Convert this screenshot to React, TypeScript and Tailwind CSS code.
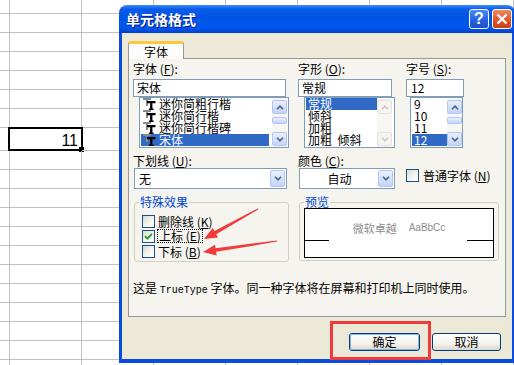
import React from "react";

const ROWS = [14, 19, 19, 19, 19, 19, 19, 23, 19, 19, 19, 19, 19, 19, 19, 19, 19, 19, 19, 19, 19];
const COLS = [10, 72, 72, 72, 72, 72, 72, 72];

const SB_ON = "border-[#B4C7F4] bg-[linear-gradient(180deg,#E8EFFE_0%,#C3D4FB_100%)]";
const SB_OFF = "border-[#E6E4DA] bg-[#F5F4EF]";

function Chevron({ up = false, color = "#4D6185" }: { up?: boolean; color?: string }) {
  return (
    <svg width="8" height="5" viewBox="0 0 8 5">
      <path d={up ? "M1 4.2 L4 1.2 L7 4.2" : "M1 0.8 L4 3.8 L7 0.8"} fill="none" stroke={color} strokeWidth="1.6" />
    </svg>
  );
}

function ScrollBar({ disabled = false, className = "" }: { disabled?: boolean; className?: string }) {
  const btn = disabled ? SB_OFF : SB_ON;
  const arrow = disabled ? "#CBC9BC" : "#4D6185";
  return (
    <div className={`flex w-[15px] flex-col bg-[#F7F6F2] pb-[1px] pt-[2px] ${className}`}>
      <div className={`flex h-[14px] items-center justify-center rounded-[2px] border ${btn}`}>
        <Chevron up color={arrow} />
      </div>
      {!disabled && <div className={`mt-[3px] h-[7px] rounded-[2px] border ${btn}`} />}
      <div className={`mt-auto flex h-[14px] items-center justify-center rounded-[2px] border ${btn}`}>
        <Chevron color={arrow} />
      </div>
    </div>
  );
}

// TrueType badge shown in front of each font name
function TTIcon() {
  return (
    <svg className="ml-[2px] mr-[3px] shrink-0" width="13" height="12" viewBox="0 0 13 12">
      <path d="M0 0 H8 V2 H5 V8 H3 V2 H0 Z" fill="#8A8A8A" />
      <path d="M4 3 H12.5 V5.2 H9.4 V10.6 H10.6 V12 H5.9 V10.6 H7.1 V5.2 H4 Z" fill="#000" />
    </svg>
  );
}

function Row({ text, selected = false, icon = false }: { text: string; selected?: boolean; icon?: boolean }) {
  return (
    <div
      className={`flex h-[12px] items-center whitespace-pre leading-[12px] ${
        selected ? "bg-[#316AC5] text-white" : ""
      }`}
    >
      {icon && <TTIcon />}
      <span className={icon ? "" : "pl-[2px]"}>{text}</span>
    </div>
  );
}

function Check({ checked = false }: { checked?: boolean }) {
  return (
    <span className="flex h-[13px] w-[13px] shrink-0 items-center justify-center border border-[#1C5180] bg-[linear-gradient(135deg,#DCDBD5_0%,#F6F6F4_60%,#FFFFFF_100%)]">
      {checked && (
        <svg width="9" height="9" viewBox="0 0 9 9">
          <path d="M1 4.2 L3.4 6.6 L8 1.8" fill="none" stroke="#21A121" strokeWidth="1.9" />
        </svg>
      )}
    </span>
  );
}

function Label({ text, k }: { text: string; k: string }) {
  return (
    <span className="whitespace-nowrap">
      {text} (<u>{k}</u>):
    </span>
  );
}

function DropDown({ text, center = false, className = "" }: { text: string; center?: boolean; className?: string }) {
  return (
    <div className={`flex h-[21px] border border-[#7F9DB9] bg-white p-[1px] ${className}`}>
      <div className={`flex flex-1 items-center ${center ? "justify-center" : "pl-[3px]"}`}>{text}</div>
      <div className={`flex w-[15px] items-center justify-center rounded-[2px] border ${SB_ON}`}>
        <Chevron />
      </div>
    </div>
  );
}

function Sheet() {
  return (
    <div className="flex flex-col">
      {ROWS.map((h, r) => (
        <div key={r} className="flex" style={{ height: h }}>
          {COLS.map((w, c) => (
            <div
              key={c}
              className="relative shrink-0 border-b border-r border-[#C0C0C0]"
              style={{ width: w }}
            >
              {r === 7 && c === 1 && (
                <>
                  <div className="flex h-full items-end justify-end pb-[1px] pr-[3px] font-['Liberation_Sans',sans-serif] text-[16px] leading-[16px]">
                    11
                  </div>
                  <div className="absolute -left-[2px] -top-[1px] h-[24px] w-[75px] border-2 border-black" />
                  <div className="absolute left-[69px] top-[19px] h-[5px] w-[5px] bg-black" />
                </>
              )}
            </div>
          ))}
        </div>
      ))}
    </div>
  );
}

function TitleBar() {
  return (
    <div className="flex h-[28px] items-center rounded-t-[8px] bg-[linear-gradient(180deg,#3C8DFF_0%,#0B5CEA_14%,#0054E3_45%,#0058EE_80%,#0040D0_100%)] pl-[7px] pr-[3px]">
      <span className="flex-1 text-[14px] font-bold leading-none text-white [text-shadow:1px_1px_#0A1C80]">
        单元格格式
      </span>
      <div className="flex h-[20px] w-[20px] items-center justify-center rounded-[3px] border border-white bg-[linear-gradient(180deg,#4D8CF5_0%,#2460DE_60%,#1D50C8_100%)] font-['Liberation_Sans',sans-serif] text-[16px] font-bold leading-none text-white">
        ?
      </div>
      <div className="ml-[3px] flex h-[20px] w-[20px] items-center justify-center rounded-[3px] border border-white bg-[linear-gradient(180deg,#F08A60_0%,#E0542B_55%,#C8401C_100%)]">
        <svg width="12" height="12" viewBox="0 0 12 12">
          <path d="M1.5 1.5 L10.5 10.5 M10.5 1.5 L1.5 10.5" stroke="#fff" strokeWidth="2.4" />
        </svg>
      </div>
    </div>
  );
}

function XpButton({ text, focus = false }: { text: string; focus?: boolean }) {
  return (
    <div className="h-[18px] rounded-[3px] border border-[#003C74] bg-[linear-gradient(180deg,#FFFFFF_0%,#F3F2EC_60%,#DCD8CC_100%)]">
      <div
        className={`flex h-full items-center justify-center rounded-[2px] leading-none ${
          focus ? "border border-[#8CB2EE]" : ""
        }`}
      >
        {text}
      </div>
    </div>
  );
}

function Panel() {
  return (
    <div className="h-[259px] border border-[#919B9C] bg-[#F5F4EF] pl-[4px] pt-[3px]">
      {/* font / style / size */}
      <div className="flex">
        <div className="w-[156px]">
          <div className="h-[17px] leading-[14px]">
            <Label text="字体" k="F" />
          </div>
          <div className="flex h-[18px] w-[153px] items-center border border-[#7F9DB9] bg-white pl-[3px]">宋体</div>
          <div className="ml-[6px] flex h-[51px] w-[150px] border border-[#7F9DB9] bg-white">
            <div className="ml-[1px] w-[128px]">
              <Row icon text="迷你简粗行楷" />
              <Row icon text="迷你简行楷" />
              <Row icon text="迷你简行楷碑" />
              <Row icon selected text="宋体" />
            </div>
            <ScrollBar className="ml-[3px]" />
          </div>
        </div>
        <div className="ml-[9px] w-[97px]">
          <div className="h-[17px] leading-[14px]">
            <Label text="字形" k="O" />
          </div>
          <div className="flex h-[18px] w-[94px] items-center border border-[#7F9DB9] bg-white pl-[3px]">常规</div>
          <div className="ml-[6px] flex h-[51px] w-[91px] border border-[#7F9DB9] bg-white">
            <div className="ml-[1px] w-[71px]">
              <Row selected text="常规" />
              <Row text="倾斜" />
              <Row text="加粗" />
              <Row text="加粗  倾斜" />
            </div>
            <ScrollBar disabled />
          </div>
        </div>
        <div className="ml-[11px] w-[58px]">
          <div className="h-[17px] leading-[14px]">
            <Label text="字号" k="S" />
          </div>
          <div className="flex h-[18px] w-[58px] items-center border border-[#7F9DB9] bg-white pl-[4px]">12</div>
          <div className="ml-[4px] flex h-[51px] w-[53px] border border-[#7F9DB9] bg-white">
            <div className="ml-[1px] w-[35px]">
              <Row text="9" />
              <Row text="10" />
              <Row text="11" />
              <Row selected text="12" />
            </div>
            <ScrollBar />
          </div>
        </div>
      </div>

      {/* underline / colour / normal font */}
      <div className="mt-[6px] flex">
        <div className="w-[156px]">
          <div className="h-[14px] leading-[14px]">
            <Label text="下划线" k="U" />
          </div>
          <DropDown text="无" className="ml-[1px] w-[153px]" />
        </div>
        <div className="ml-[9px] w-[97px]">
          <div className="h-[14px] leading-[14px]">
            <Label text="颜色" k="C" />
          </div>
          <DropDown center text="自动" className="ml-[1px] w-[96px]" />
        </div>
        <div className="ml-[11px] flex items-start pt-[15px]">
          <Check />
          <span className="ml-[4px] whitespace-nowrap leading-[13px]">
            普通字体 (<u>N</u>)
          </span>
        </div>
      </div>

      {/* effects / preview */}
      <div className="mt-[7px] flex">
        <fieldset className="ml-[1px] h-[66px] w-[155px] rounded-[3px] border border-[#D0D0BF] pl-[4px]">
          <legend className="px-[1px] leading-[12px] text-[#0046D5]">特殊效果</legend>
          <div className="ml-[3px] flex flex-col pt-[7px]">
            <div className="flex h-[15px] items-start">
              <Check />
              <span className="ml-[3px] leading-[13px]">
                删除线 (<u>K</u>)
              </span>
            </div>
            <div className="flex h-[15px] items-start">
              <Check checked />
              <span className="ml-[2px] -mt-[1px] border border-dotted border-black px-[1px] leading-[12px]">
                上标 (<u>E</u>)
              </span>
            </div>
            <div className="flex h-[15px] items-start">
              <Check />
              <span className="ml-[3px] leading-[13px]">
                下标 (<u>B</u>)
              </span>
            </div>
          </div>
        </fieldset>
        <fieldset className="ml-[10px] h-[65px] w-[200px] rounded-[3px] border border-[#D0D0BF] pl-[4px]">
          <legend className="px-[1px] leading-[12px] text-[#0046D5]">预览</legend>
          <div className="flex h-[50px] w-[190px] flex-col border border-black bg-white pt-[13px]">
            <div className="flex h-[12px] items-center justify-center text-[11px] leading-[12px] text-[#8C8C8C]">
              <span>微软卓越</span>
              <span className="ml-[12px] font-['Liberation_Sans',sans-serif] text-[10px]">AaBbCc</span>
            </div>
            <div className="mt-[6px] flex justify-between">
              <div className="h-[1px] w-[24px] bg-black" />
              <div className="h-[1px] w-[26px] bg-black" />
            </div>
          </div>
        </fieldset>
      </div>

      <div className="mt-[19px] whitespace-pre leading-[14px]">
        这是 <span className="font-['Liberation_Mono',monospace] text-[10px]">TrueType</span> 字体。同一种字体将在屏幕和打印机上同时使用。
      </div>
    </div>
  );
}

function Dialog() {
  return (
    <div className="absolute left-[119px] top-[5px] flex h-[358px] w-[396px] flex-col">
      <TitleBar />
      <div className="flex flex-1 flex-col border-x-[3px] border-b-[4px] border-[#0A4BE2] bg-[#ECE9D8] px-[6px] pt-[8px]">
        <div className="relative z-10 -mb-[1px] flex h-[18px] w-[56px] items-center justify-center rounded-t-[3px] border-x border-t-[3px] border-x-[#919B9C] border-t-[#FFC83C] bg-[#FCFCFA]">
          字体
        </div>
        <Panel />
        <div className="mt-[16px] flex justify-end gap-[12px] pr-[5px]">
          <div className="w-[71px]">
            <XpButton focus text="确定" />
          </div>
          <div className="w-[69px]">
            <XpButton text="取消" />
          </div>
        </div>
      </div>
    </div>
  );
}

function arrow(tx: number, ty: number, px: number, py: number) {
  const dx = px - tx;
  const dy = py - ty;
  const l = Math.hypot(dx, dy);
  const ux = dx / l;
  const uy = dy / l;
  const nx = -uy;
  const ny = ux;
  const bx = px - ux * 13;
  const by = py - uy * 13;
  const pts = [
    [tx + nx * 0.6, ty + ny * 0.6],
    [bx + nx * 1.8, by + ny * 1.8],
    [bx + nx * 5.5, by + ny * 5.5],
    [px, py],
    [bx - nx * 5.5, by - ny * 5.5],
    [bx - nx * 1.8, by - ny * 1.8],
    [tx - nx * 0.6, ty - ny * 0.6],
  ];
  return pts.map((p) => p.join(",")).join(" ");
}

function Annotations() {
  return (
    <>
      <div className="absolute left-[330px] top-[321px] h-[39px] w-[101px] border-[3px] border-[#F23A3A]" />
      <svg className="pointer-events-none absolute left-0 top-0" width="514" height="365">
        <polygon points={arrow(258, 209, 204, 239)} fill="#F03C3C" />
        <polygon points={arrow(277, 241, 203, 252)} fill="#F03C3C" />
      </svg>
    </>
  );
}

export default function App() {
  return (
    <div className="relative h-[365px] w-[514px] overflow-hidden bg-white font-['Noto_Sans_CJK_SC',sans-serif] text-[12px] text-black">
      <Sheet />
      <Dialog />
      <Annotations />
    </div>
  );
}
